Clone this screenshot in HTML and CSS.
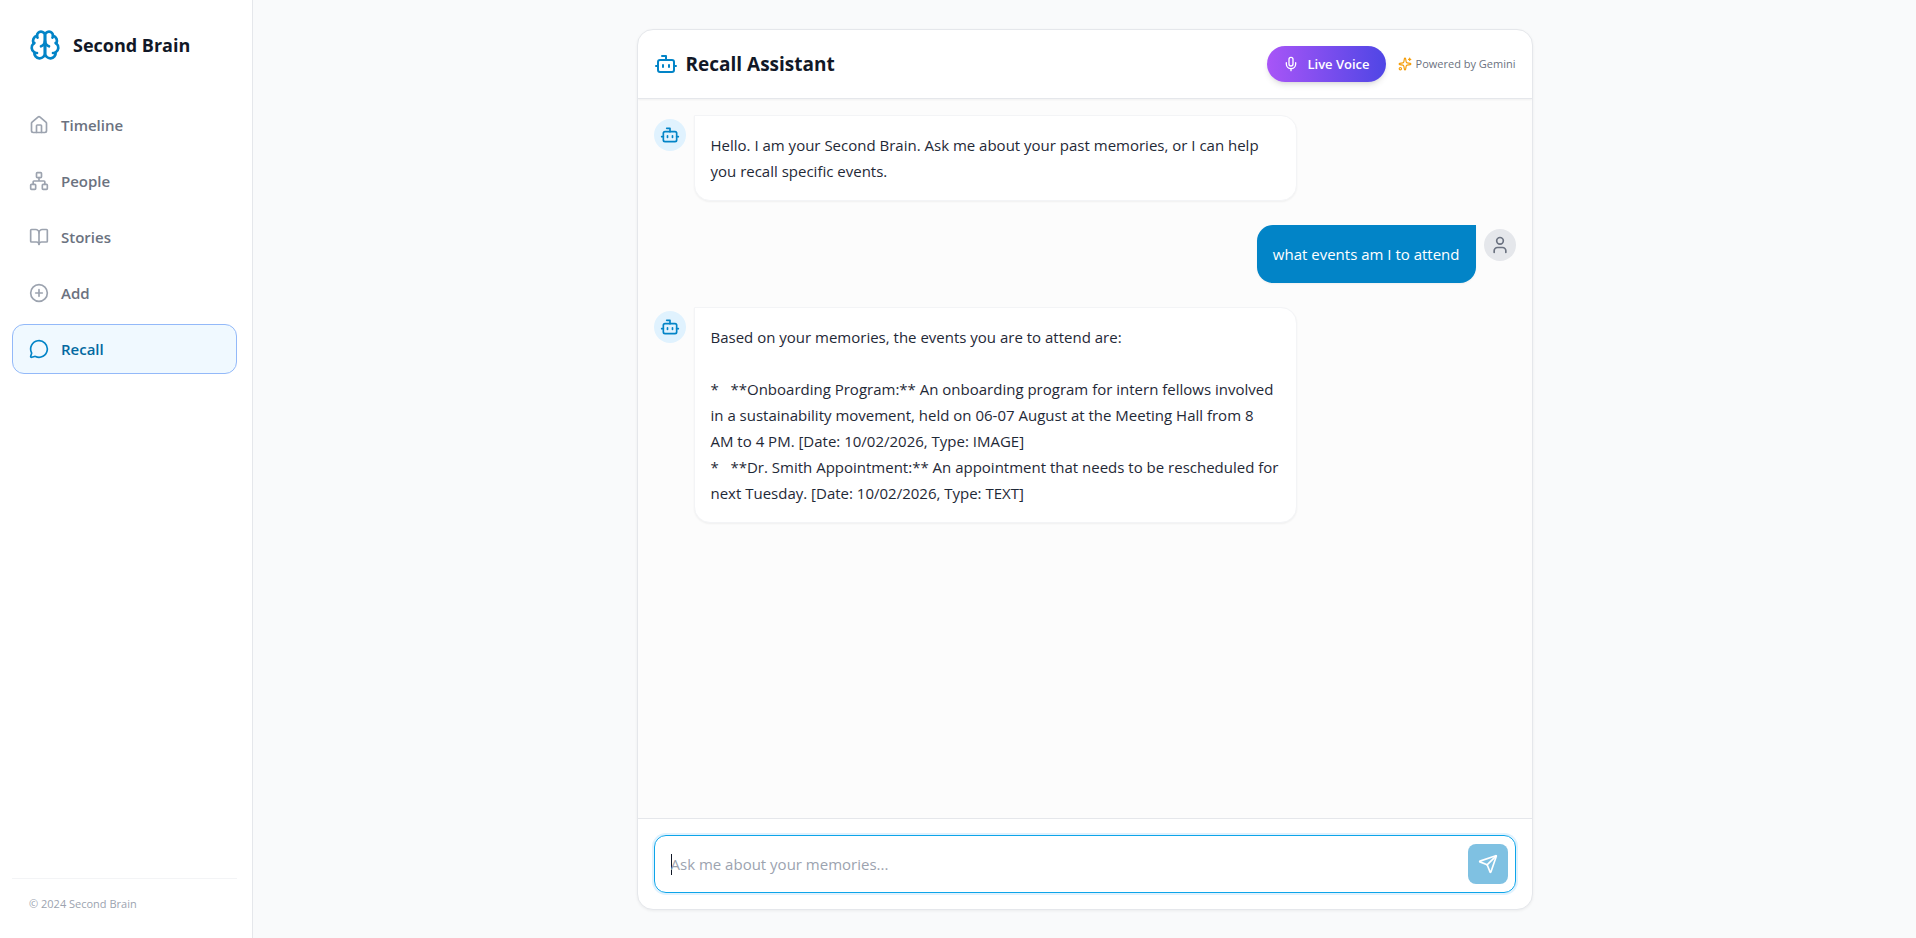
FILE: index.html
```html
<!DOCTYPE html>
<html lang="en">
<head>
	<meta charset="utf-8">
	<title>Second Brain</title>
	<meta name="viewport" content="width=device-width, initial-scale=1.0">
	<link rel="stylesheet" href="styles.css">
</head>
<body>
	<!-- shared icons -->
	<svg class="sprite" aria-hidden="true">
		<symbol id="bot" viewBox="0 0 24 24">
			<path d="M12 8V4H8"/>
			<rect width="16" height="12" x="4" y="8" rx="2"/>
			<path d="M2 14h2M20 14h2M15 13v2M9 13v2"/>
		</symbol>
	</svg>

	<aside class="sidebar">
		<div class="brand">
			<svg class="icon brand-icon" viewBox="0 0 24 24">
				<path d="M12 5a3 3 0 1 0-5.997.125 4 4 0 0 0-2.526 5.77 4 4 0 0 0 .556 6.588A4 4 0 1 0 12 18Z"/>
				<path d="M12 5a3 3 0 1 1 5.997.125 4 4 0 0 1 2.526 5.77 4 4 0 0 1-.556 6.588A4 4 0 1 1 12 18Z"/>
				<path d="M15 13a4.5 4.5 0 0 1-3-4 4.5 4.5 0 0 1-3 4"/>
				<path d="M17.599 6.5a3 3 0 0 0 .399-1.375M6.003 5.125A3 3 0 0 0 6.401 6.5"/>
				<path d="M3.477 10.896a4 4 0 0 1 .585-.396M19.938 10.5a4 4 0 0 1 .585.396"/>
				<path d="M6 18a4 4 0 0 1-1.967-.516M19.967 17.484A4 4 0 0 1 18 18"/>
			</svg>
			<span class="brand-name">Second Brain</span>
		</div>

		<nav class="nav">
			<a class="nav-link" href="#timeline">
				<svg class="icon" viewBox="0 0 24 24">
					<path d="M15 21v-8a1 1 0 0 0-1-1h-4a1 1 0 0 0-1 1v8"/>
					<path d="M3 10a2 2 0 0 1 .709-1.528l7-5.999a2 2 0 0 1 2.582 0l7 5.999A2 2 0 0 1 21 10v9a2 2 0 0 1-2 2H5a2 2 0 0 1-2-2z"/>
				</svg>
				Timeline
			</a>
			<a class="nav-link" href="#people">
				<svg class="icon" viewBox="0 0 24 24">
					<rect x="16" y="16" width="6" height="6" rx="1"/>
					<rect x="2" y="16" width="6" height="6" rx="1"/>
					<rect x="9" y="2" width="6" height="6" rx="1"/>
					<path d="M5 16v-3a1 1 0 0 1 1-1h12a1 1 0 0 1 1 1v3M12 12V8"/>
				</svg>
				People
			</a>
			<a class="nav-link" href="#stories">
				<svg class="icon" viewBox="0 0 24 24">
					<path d="M12 7v14"/>
					<path d="M3 18a1 1 0 0 1-1-1V4a1 1 0 0 1 1-1h5a4 4 0 0 1 4 4 4 4 0 0 1 4-4h5a1 1 0 0 1 1 1v13a1 1 0 0 1-1 1h-6a3 3 0 0 0-3 3 3 3 0 0 0-3-3z"/>
				</svg>
				Stories
			</a>
			<a class="nav-link" href="#add">
				<svg class="icon" viewBox="0 0 24 24">
					<circle cx="12" cy="12" r="10"/>
					<path d="M8 12h8M12 8v8"/>
				</svg>
				Add
			</a>
			<a class="nav-link active" href="#recall" aria-current="page">
				<svg class="icon" viewBox="0 0 24 24">
					<path d="M2.992 16.342a2 2 0 0 1 .094 1.167l-1.065 3.29a1 1 0 0 0 1.236 1.168l3.413-.998a2 2 0 0 1 1.099.092 10 10 0 1 0-4.777-4.719"/>
				</svg>
				Recall
			</a>
		</nav>

		<footer class="sidebar-footer">© 2024 Second Brain</footer>
	</aside>

	<main class="main">
		<section class="chat">
			<header class="chat-header">
				<h1 class="chat-title">
					<svg class="icon title-icon"><use href="#bot"/></svg>
					Recall Assistant
				</h1>
				<button class="voice-btn" type="button">
					<svg class="icon" viewBox="0 0 24 24">
						<path d="M12 19v3"/>
						<path d="M19 10v2a7 7 0 0 1-14 0v-2"/>
						<rect x="9" y="2" width="6" height="13" rx="3"/>
					</svg>
					Live Voice
				</button>
				<span class="powered">
					<svg class="icon" viewBox="0 0 24 24">
						<path d="M11.017 2.814a1 1 0 0 1 1.966 0l1.051 5.558a2 2 0 0 0 1.594 1.594l5.558 1.051a1 1 0 0 1 0 1.966l-5.558 1.051a2 2 0 0 0-1.594 1.594l-1.051 5.558a1 1 0 0 1-1.966 0l-1.051-5.558a2 2 0 0 0-1.594-1.594l-5.558-1.051a1 1 0 0 1 0-1.966l5.558-1.051a2 2 0 0 0 1.594-1.594z"/>
						<path d="M20 2v4M22 4h-4"/>
						<circle cx="4" cy="20" r="2"/>
					</svg>
					Powered by Gemini
				</span>
			</header>

			<div class="messages">
				<div class="message">
					<div class="avatar"><svg class="icon"><use href="#bot"/></svg></div>
					<div class="bubble">Hello. I am your Second Brain. Ask me about your past memories, or I can help you recall specific events.</div>
				</div>
				<div class="message user">
					<div class="avatar">
						<svg class="icon" viewBox="0 0 24 24">
							<path d="M19 21v-2a4 4 0 0 0-4-4H9a4 4 0 0 0-4 4v2"/>
							<circle cx="12" cy="7" r="4"/>
						</svg>
					</div>
					<div class="bubble">what events am I to attend</div>
				</div>
				<div class="message">
					<div class="avatar"><svg class="icon"><use href="#bot"/></svg></div>
					<div class="bubble">Based on your memories, the events you are to attend are:

*   **Onboarding Program:** An onboarding program for intern fellows involved in a sustainability movement, held on 06-07 August at the Meeting Hall from 8 AM to 4 PM. [Date: 10/02/2026, Type: IMAGE]
*   **Dr. Smith Appointment:** An appointment that needs to be rescheduled for next Tuesday. [Date: 10/02/2026, Type: TEXT]</div>
				</div>
			</div>

			<form class="composer">
				<div class="composer-box">
					<input class="composer-input" type="text" placeholder="Ask me about your memories..." aria-label="Ask me about your memories">
					<button class="send-btn" type="submit" aria-label="Send" disabled>
						<svg class="icon" viewBox="0 0 24 24">
							<path d="M14.536 21.686a.5.5 0 0 0 .937-.024l6.5-19a.496.496 0 0 0-.635-.635l-19 6.5a.5.5 0 0 0-.024.937l7.93 3.18a2 2 0 0 1 1.112 1.11z"/>
							<path d="m21.854 2.147-10.94 10.939"/>
						</svg>
					</button>
				</div>
			</form>
		</section>
	</main>
</body>
</html>
```
FILE: styles.css
```css
* {
	box-sizing: border-box;
	margin: 0;
	padding: 0;
}
body {
	display: flex;
	height: 100vh;
	background: #f9fafb;
	color: #111827;
	font-family: "Segoe UI", "Open Sans", "Noto Sans", sans-serif;
	font-size: 15px;
	line-height: 26px;
}
button, input {
	font: inherit;
	border: none;
	outline: none;
}
.sprite {
	position: absolute;
	width: 0;
	height: 0;
}
.icon {
	width: 20px;
	height: 20px;
	flex-shrink: 0;
	fill: none;
	stroke: currentColor;
	stroke-width: 2;
	stroke-linecap: round;
	stroke-linejoin: round;
}

/* sidebar */
.sidebar {
	display: flex;
	flex-direction: column;
	width: 253px;
	flex-shrink: 0;
	padding: 29px 15px 21px 12px;
	background: #fff;
	border-right: 1px solid #e5e7eb;
}
.brand {
	display: flex;
	align-items: center;
	gap: 12px;
	padding: 0 17px;
	margin-bottom: 39px;
}
.brand-icon {
	width: 32px;
	height: 32px;
	color: #0284c7;
}
.brand-name {
	font-size: 18px;
	font-weight: 700;
}
.nav {
	display: flex;
	flex-direction: column;
	gap: 6px;
}
.nav-link {
	display: flex;
	align-items: center;
	gap: 12px;
	height: 50px;
	padding: 0 16px;
	border: 1px solid transparent;
	border-radius: 12px;
	color: #6b7280;
	font-weight: 600;
	text-decoration: none;
}
.nav-link .icon {
	color: #9ca3af;
}
.nav-link.active {
	background: #f0f9ff;
	border-color: #93b9f9;
	color: #0369a1;
}
.nav-link.active .icon {
	color: #0284c7;
}
.sidebar-footer {
	margin-top: auto;
	padding: 12px 17px 0;
	border-top: 1px solid #f3f4f6;
	color: #9ca3af;
	font-size: 11px;
}

/* chat card */
.main {
	flex: 1;
	display: flex;
	justify-content: center;
	padding: 29px 32px 28px;
}
.chat {
	display: flex;
	flex-direction: column;
	width: 100%;
	max-width: 896px;
	background: #fff;
	border: 1px solid #e5e7eb;
	border-radius: 16px;
	box-shadow: 0 1px 3px rgba(0, 0, 0, 0.06);
	overflow: hidden;
}
.chat-header {
	display: flex;
	align-items: center;
	gap: 12px;
	padding: 16px;
	border-bottom: 1px solid #e5e7eb;
	box-shadow: 0 1px 2px rgba(0, 0, 0, 0.05);
	z-index: 1;
}
.chat-title {
	display: flex;
	align-items: center;
	gap: 8px;
	margin-right: auto;
	font-size: 19px;
	font-weight: 700;
}
.title-icon {
	width: 24px;
	height: 24px;
	color: #0284c7;
}
.voice-btn {
	display: flex;
	align-items: center;
	gap: 8px;
	height: 36px;
	padding: 0 16px;
	border-radius: 18px;
	background: linear-gradient(to right, #a855f7, #4f46e5);
	box-shadow: 0 4px 6px -1px rgba(0, 0, 0, 0.1), 0 2px 4px -2px rgba(0, 0, 0, 0.1);
	color: #fff;
	font-size: 13px;
	font-weight: 600;
}
.voice-btn .icon {
	width: 16px;
	height: 16px;
}
.powered {
	display: flex;
	align-items: center;
	gap: 4px;
	color: #6b7280;
	font-size: 11px;
}
.powered .icon {
	width: 14px;
	height: 14px;
	color: #f59e0b;
}

/* messages */
.messages {
	flex: 1;
	display: flex;
	flex-direction: column;
	gap: 24px;
	min-height: 0;
	padding: 16px;
	background: #fcfcfc;
	overflow-y: auto;
}
.message {
	display: flex;
	align-items: flex-start;
	gap: 8px;
}
.message.user {
	flex-direction: row-reverse;
}
.avatar {
	display: flex;
	align-items: center;
	justify-content: center;
	width: 32px;
	height: 32px;
	margin-top: 4px;
	flex-shrink: 0;
	border-radius: 50%;
	background: #e0f2fe;
	color: #0284c7;
}
.bubble {
	max-width: 70%;
	padding: 16px;
	background: #fff;
	border: 1px solid #f3f4f6;
	border-radius: 0 16px 16px 16px;
	box-shadow: 0 1px 2px rgba(0, 0, 0, 0.05);
	color: #1f2937;
	white-space: pre-wrap;
}
.user .avatar {
	background: #e5e7eb;
	color: #6b7280;
}
.user .bubble {
	background: #0284c7;
	border: none;
	border-radius: 16px 0 16px 16px;
	color: #fff;
}

/* composer */
.composer {
	padding: 16px;
	border-top: 1px solid #e5e7eb;
}
.composer-box {
	display: flex;
	align-items: center;
	height: 58px;
	padding: 0 7px 0 16px;
	border: 1px solid #0ea5e9;
	border-radius: 12px;
	box-shadow: 0 0 0 2px #e0f2fe;
}
.composer-input {
	flex: 1;
	min-width: 0;
	background: none;
	color: #111827;
}
/* caret on the empty field */
.composer-input:placeholder-shown {
	background: linear-gradient(#111827, #111827) left center / 1px 21px no-repeat;
	caret-color: transparent;
}
.composer-input::placeholder {
	color: #9ca3af;
}
.send-btn {
	display: flex;
	align-items: center;
	justify-content: center;
	width: 40px;
	height: 40px;
	border-radius: 8px;
	background: #0284c7;
	color: #fff;
	opacity: 0.5;
}
```
